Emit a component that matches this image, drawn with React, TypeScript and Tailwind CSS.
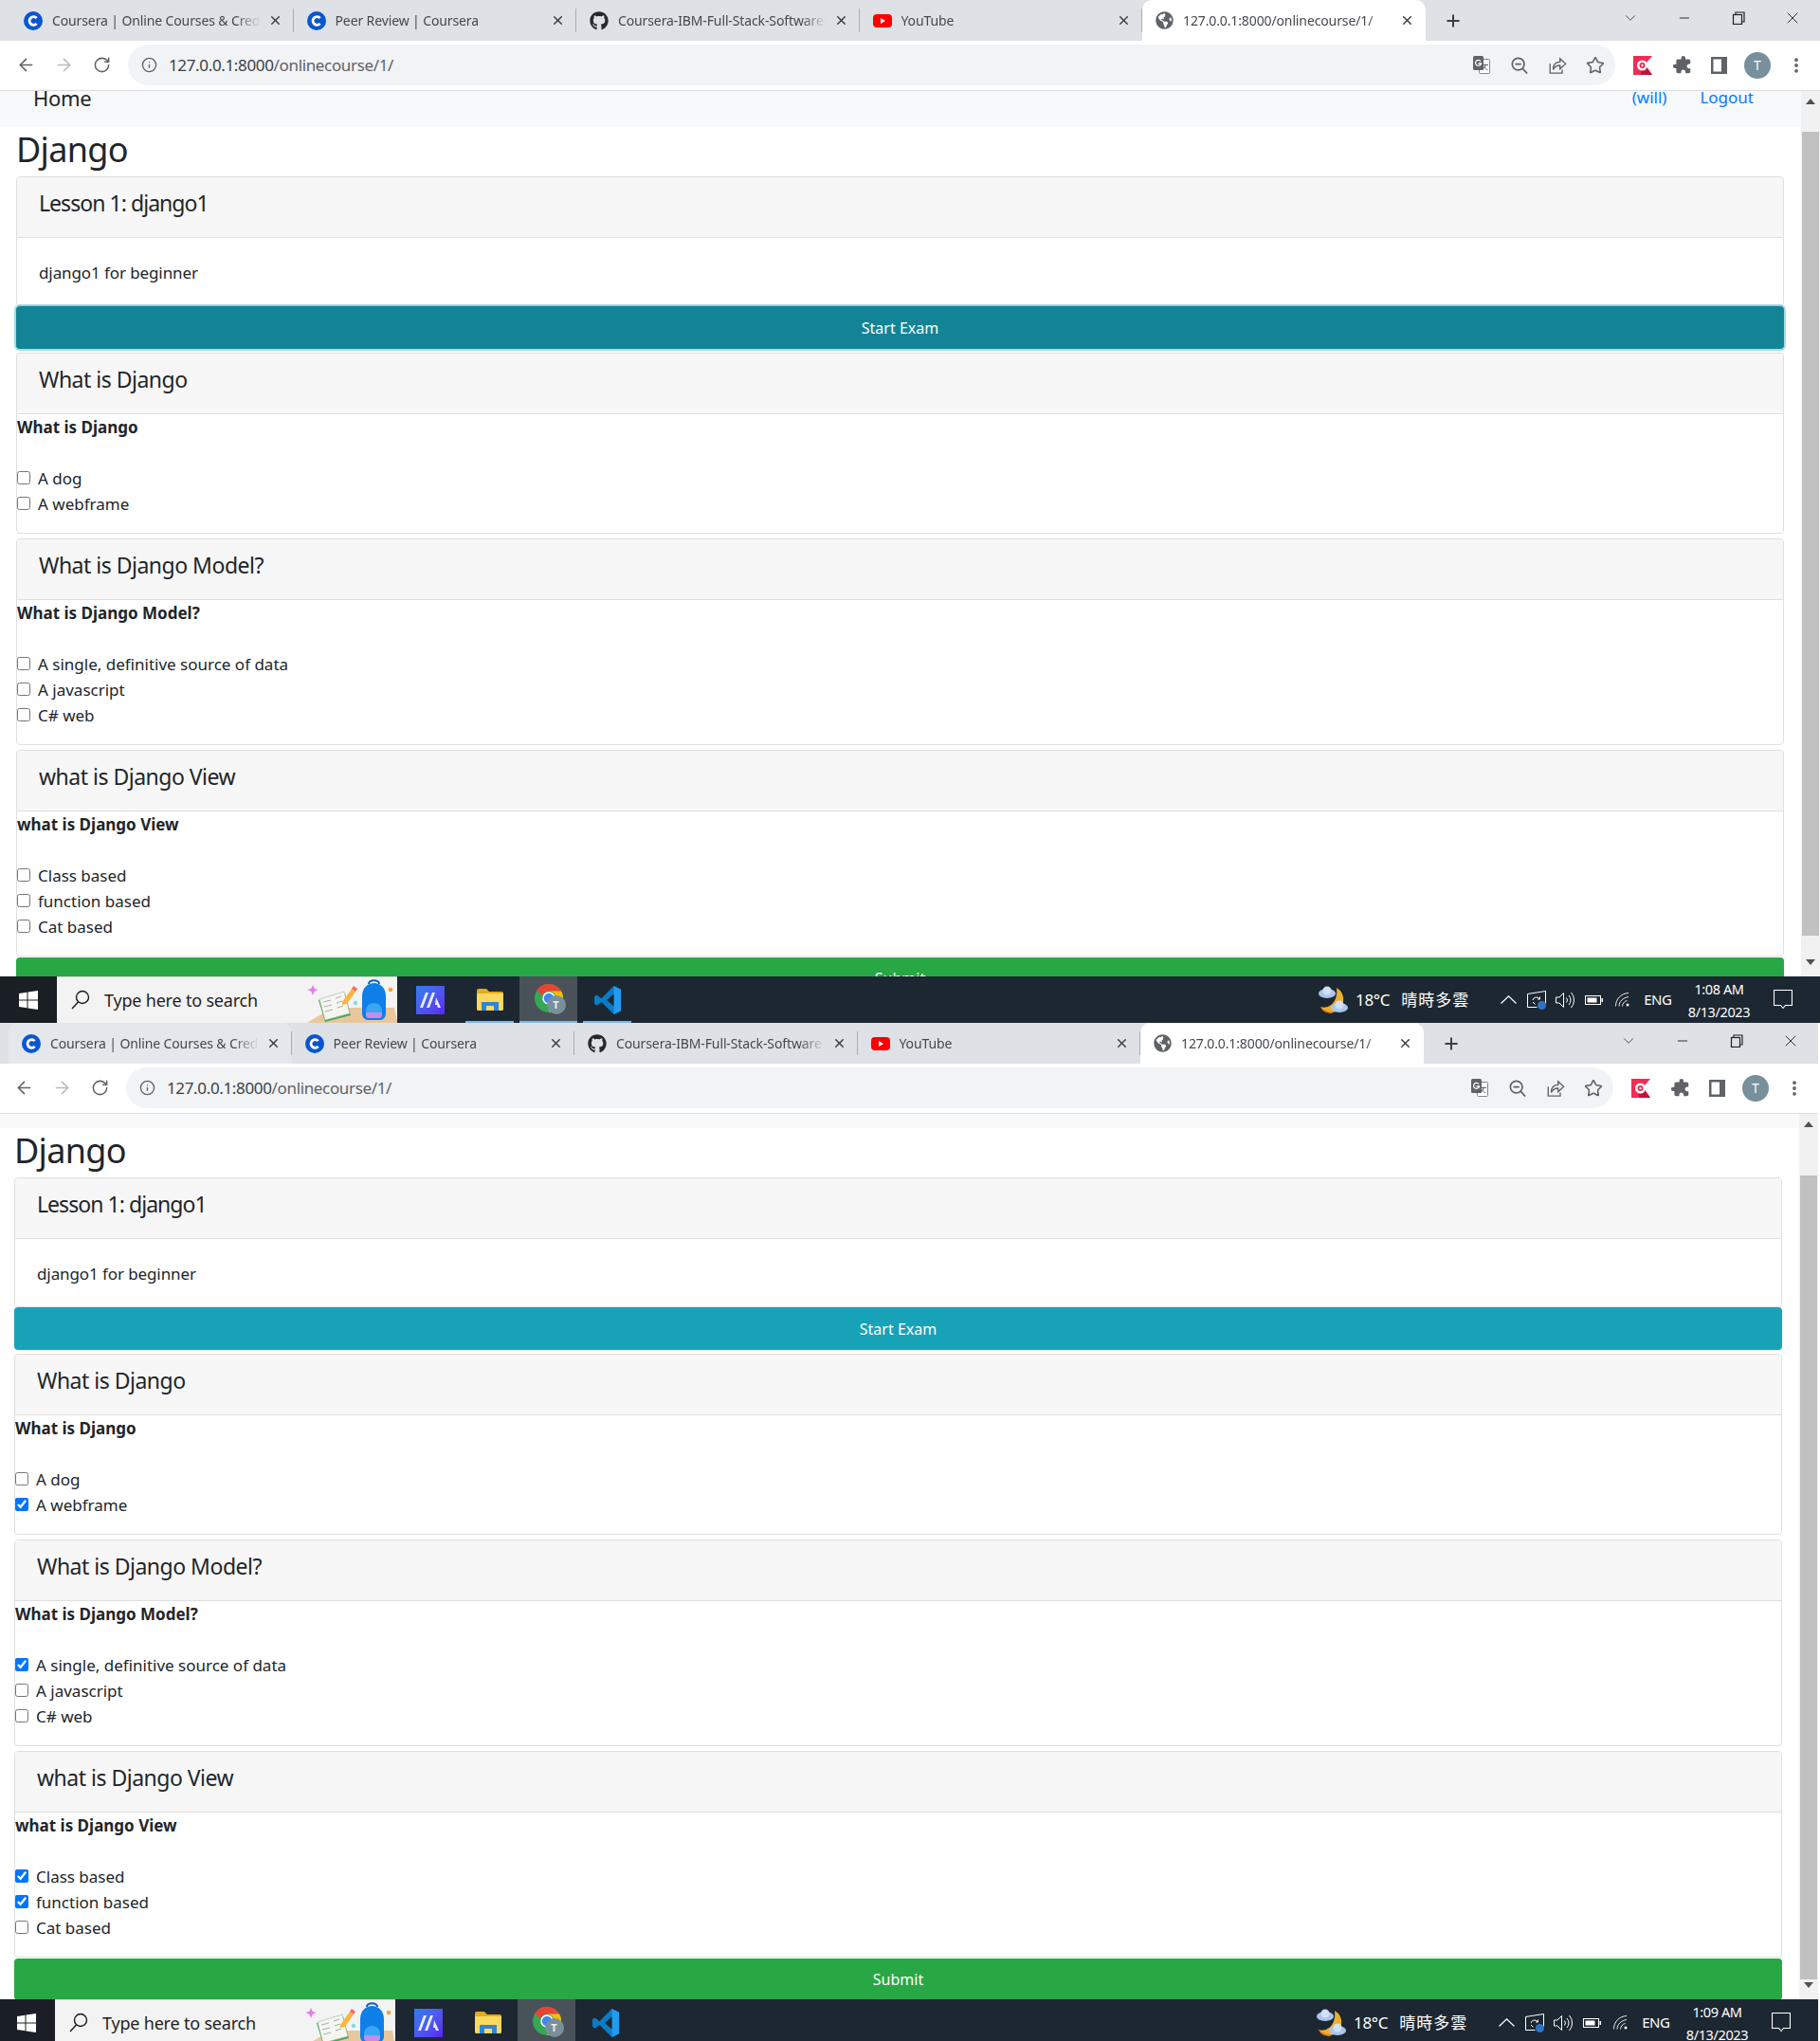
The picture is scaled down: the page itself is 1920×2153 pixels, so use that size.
import React from "react";
import { ArrowLeft, ArrowRight, RotateCw, Info, Star, X, Plus, ChevronDown, Minus, MoreVertical } from "lucide-react";
import { FaGithub, FaGlobeAmericas } from "react-icons/fa";
import { MdExtension } from "react-icons/md";

const CourseraIcon = () => (
  <svg width="20" height="20" viewBox="0 0 20 20" className="shrink-0">
    <circle cx="10" cy="10" r="10" fill="#0a56d2" />
    <path d="M13.6 7.2A4.3 4.3 0 1 0 13.6 12.8" fill="none" stroke="#fff" strokeWidth="2.8" />
  </svg>
);
const YoutubeIcon = () => (
  <svg width="20" height="20" viewBox="0 0 20 20" className="shrink-0">
    <rect x="0" y="3" width="20" height="14" rx="4" fill="#f00" />
    <path d="M8 7l5 3-5 3z" fill="#fff" />
  </svg>
);

type TabT = { icon: React.ReactNode; title: string; active?: boolean; hover?: boolean };

function Tab({ icon, title, active, hover }: TabT) {
  return (
    <div className={`relative flex items-center w-[298.5px] h-[43px] pl-[14px] pr-[12px] shrink-0 rounded-t-[10px] ${active ? "bg-white" : hover ? "bg-[#e4e7eb]" : ""}`}>
      {icon}
      <span className="ml-[10px] -mt-[1px] flex-1 overflow-hidden whitespace-nowrap text-[14px] text-[#45494e] tracking-[-0.12px] [mask-image:linear-gradient(to_right,black_88%,transparent)]">
        {title}
      </span>
      <X size={15} strokeWidth={2.4} className="ml-[8px] shrink-0 text-[#3c4043]" />
      {!active && <div className="ml-[11px] -mr-[12px] w-px h-[25px] bg-[#a9adb2] shrink-0" />}
    </div>
  );
}

function TabStrip({ hoverFirst }: { hoverFirst?: boolean }) {
  return (
    <div className="flex items-start h-[43px] bg-[#dee1e6] pl-[11px]">
      <Tab hover={hoverFirst} icon={<CourseraIcon />} title="Coursera | Online Courses & Credentials" />
      <Tab icon={<CourseraIcon />} title="Peer Review | Coursera" />
      <Tab icon={<FaGithub size={20} className="shrink-0 text-[#24292e]" />} title="Coursera-IBM-Full-Stack-Software-Developer" />
      <Tab icon={<YoutubeIcon />} title="YouTube" />
      <Tab active icon={<FaGlobeAmericas size={19} className="shrink-0 text-[#5f6368]" />} title="127.0.0.1:8000/onlinecourse/1/" />
      <Plus size={20} strokeWidth={2.4} className="ml-[19px] mt-[12px] shrink-0 text-[#3c4043]" />
      <ChevronDown size={18} strokeWidth={1.2} className="ml-[168px] mt-[10px] shrink-0 text-[#3c4043]" />
      <Minus size={16} strokeWidth={1.4} className="ml-[40px] mt-[11px] shrink-0 text-[#202124]" />
      <svg width="14" height="14" viewBox="0 0 14 14" className="ml-[42px] mt-[12px] shrink-0" fill="none" stroke="#202124" strokeWidth="1.2">
        <rect x="1.5" y="3.5" width="9" height="10" fill="#dee1e6" />
        <path d="M4 3.5V1h9v10h-2.5" />
      </svg>
      <X size={20} strokeWidth={1.1} className="ml-[40px] mt-[9px] shrink-0 text-[#202124]" />
    </div>
  );
}

const Slot = ({ w, children }: { w: number; children: React.ReactNode }) => (
  <div className="flex justify-center items-center shrink-0" style={{ width: w }}>{children}</div>
);

function Toolbar() {
  return (
    <div className="flex items-center h-[53px] bg-white border-b border-[#dadce0] pl-[7px] pb-[1px]">
      <Slot w={40}><ArrowLeft size={21} strokeWidth={1.8} className="text-[#5f6368]" /></Slot>
      <Slot w={40}><ArrowRight size={21} strokeWidth={1.8} className="text-[#b9bbbe]" /></Slot>
      <Slot w={41}><RotateCw size={19} strokeWidth={1.9} className="text-[#5f6368]" /></Slot>
      <div className="ml-[7px] flex items-center w-[1569px] h-[43px] rounded-full bg-[#f1f3f4] shrink-0">
        <Info size={17} strokeWidth={1.9} className="ml-[14px] text-[#5f6368]" />
        <span className="ml-[12px] mt-[1px] text-[17px] text-[#3c4043] tracking-[-0.35px]">
          127.0.0.1:8000<span className="text-[#5f6368]">/onlinecourse/1/</span>
        </span>
        <div className="ml-auto mr-[2px] flex items-center">
          <Slot w={40}>
            <svg width="18" height="19" viewBox="0 0 18 19">
              <rect x="6.500" y="3.500" width="11" height="15" rx="1" fill="#fff" stroke="#80868b" />
              <rect x="0" y="0" width="11" height="15" rx="1.500" fill="#5f6368" />
              <path d="M8 5.500A3 3 0 1 0 8.500 8H5.500" fill="none" stroke="#fff" strokeWidth="1.300" />
              <path d="M10 9.500h6M13 8.500v1c0 2-1.500 4-3 5M11.500 11.500c1 1.500 2.500 3 4 3.500" fill="none" stroke="#5f6368" strokeWidth="1" />
            </svg>
          </Slot>
          <Slot w={40}>
            <svg width="18" height="18" viewBox="0 0 20 20" fill="none" stroke="#5f6368" strokeWidth="1.900">
              <circle cx="8.500" cy="8.500" r="7" />
              <path d="M13.500 13.500L19 19.500M5 8.500h7" />
            </svg>
          </Slot>
          <Slot w={40}>
            <svg width="20" height="20" viewBox="0 0 22 22" fill="none" stroke="#5f6368" strokeWidth="1.500">
              <path d="M2.500 9v11h14v-4" />
              <path d="M6 16c0-6 3-9 8-9V3l6.500 6-6.500 6v-4c-3.500 0-6 1-8 5z" />
            </svg>
          </Slot>
          <Slot w={39}><Star size={20} strokeWidth={1.9} className="text-[#5f6368]" /></Slot>
        </div>
      </div>
      <Slot w={50}>
        <svg width="20" height="20" viewBox="0 0 20 20" className="ml-[8px]">
          <path d="M0 0h20l-8 9.500L20 20H0z" fill="#f02d55" />
          <path d="M8 16l5-6 7 10H8z" fill="#c4103a" />
          <circle cx="9.500" cy="10" r="5.500" fill="#fff" />
          <circle cx="9.500" cy="10" r="3" fill="#e8274b" />
          <circle cx="9.500" cy="10" r="1.200" fill="#fff" />
        </svg>
      </Slot>
      <Slot w={39}><MdExtension size={21} className="text-[#5f6368] ml-[2px] -scale-x-100" /></Slot>
      <Slot w={40}>
        <svg width="17" height="18" viewBox="0 0 17 18" className="ml-[1px]">
          <rect x="0" y="0" width="17" height="18" fill="#5f6368" />
          <rect x="2.500" y="2.500" width="8.500" height="13" fill="#fff" />
        </svg>
      </Slot>
      <Slot w={40}>
        <div className="ml-[2px] flex items-center justify-center w-[28px] h-[28px] rounded-full bg-[#78909c] text-white text-[14px]">T</div>
      </Slot>
      <Slot w={40}><MoreVertical size={20} strokeWidth={2.6} className="text-[#5f6368] ml-[3px]" /></Slot>
    </div>
  );
}

function Cb({ label, checked }: { label: string; checked?: boolean }) {
  return (
    <label className="flex items-center h-[27px]">
      <input type="checkbox" readOnly checked={!!checked} className="w-[14px] h-[14px] m-0 -mt-[2px] shrink-0" />
      <span className="ml-[8px] text-[17px] text-[#212529]">{label}</span>
    </label>
  );
}

function CardHeader({ title, tight }: { title: string; tight?: boolean }) {
  return (
    <div className="h-[64px] bg-[#f7f7f7] border-b border-[#dfdfdf] pl-[23px] pt-[9px] rounded-t-[4px]">
      <h3 className={`text-[23px] leading-[36px] text-[#212529] font-normal ${tight ? "tracking-[-0.95px]" : "tracking-[-0.5px]"}`}>{title}</h3>
    </div>
  );
}

type Opt = { label: string; checked?: boolean };

function Question({ title, opts, first, last }: { title: string; opts: Opt[]; first?: boolean; last?: boolean }) {
  return (
    <div className={`border border-[#dfdfdf] rounded-[4px] ${first ? "mt-[4px]" : "mt-[5px]"} ${last ? "mb-[1px]" : ""}`}>
      <CardHeader title={title} />
      <div className="pb-[17px]">
        <div className="h-[54px] pt-[2px] text-[17px] leading-[24px] font-bold text-[#212529]">{title}</div>
        <div>
          {opts.map((o) => <Cb key={o.label} {...o} />)}
        </div>
      </div>
    </div>
  );
}

function Scrollbar({ thumbTop, thumbH }: { thumbTop: number; thumbH: number }) {
  return (
    <div className="flex flex-col w-[20px] shrink-0 bg-[#f1f1f1]">
      <div className="flex justify-center pt-[8px] h-[17px] shrink-0">
        <div className="w-0 h-0 border-x-[5px] border-x-transparent border-b-[6px] border-b-[#505050]" />
      </div>
      <div className="shrink-0" style={{ height: thumbTop - 17 }} />
      <div className="shrink-0 bg-[#c1c1c1] mx-[1px]" style={{ height: thumbH }} />
      <div className="flex-1" />
      <div className="flex justify-center items-start h-[18px] shrink-0">
        <div className="w-0 h-0 border-x-[5px] border-x-transparent border-t-[6px] border-t-[#505050]" />
      </div>
    </div>
  );
}

function Page({ scrolled, done }: { scrolled?: boolean; done?: boolean }) {
  return (
    <div className="flex h-[934px] overflow-hidden bg-white">
      <div className={`flex-1 min-w-0 ${scrolled ? "-mt-[23px]" : ""}`}>
        <nav className="flex justify-between h-[38px] bg-[#f8f9fa] overflow-hidden">
          <a className="ml-[35px] -mt-[8px] text-[22px] leading-[30px] text-[#212529] tracking-[-0.3px]">Home</a>
          <div className="flex text-[17px] leading-[24px] text-[#007bff] -mt-[5px] mr-[50px]">
            <a>(will)</a>
            <a className="ml-[35px]">Logout</a>
          </div>
        </nav>
        <div className="pl-[17px] pr-[18px]">
          <h2 className="h-[52px] leading-[48px] text-[36px] font-normal text-[#212529] tracking-[-0.7px]">Django</h2>
          <div className="border border-[#dfdfdf] rounded-[4px]">
            <CardHeader tight title="Lesson 1: django1" />
            <div className="h-[71px] pl-[23px] pt-[25px] text-[17px] leading-[24px] text-[#212529] tracking-[-0.1px]">django1 for beginner</div>
          </div>
          <button className={`relative block w-full h-[45px] rounded-[4px] text-[16px] text-white ${done ? "bg-[#17a2b8]" : "bg-[#138496] shadow-[0_0_0_2px_rgba(58,176,195,0.45)]"}`}>Start Exam</button>
          <Question first title="What is Django" opts={[{ label: "A dog" }, { label: "A webframe", checked: done }]} />
          <Question title="What is Django Model?" opts={[{ label: "A single, definitive source of data", checked: done }, { label: "A javascript" }, { label: "C# web" }]} />
          <Question last title="what is Django View" opts={[{ label: "Class based", checked: done }, { label: "function based", checked: done }, { label: "Cat based" }]} />
          <button className="block w-full h-[44px] rounded-[4px] bg-[#28a745] text-[16px] text-white">Submit</button>
        </div>
      </div>
      <Scrollbar thumbTop={scrolled ? 65 : 43} thumbH={848} />
    </div>
  );
}

const TrayUnderline = ({ w, children, bg }: { w: number; children: React.ReactNode; bg?: boolean }) => (
  <div className={`relative flex items-center justify-center h-[49px] shrink-0 ${bg ? "bg-[#4a5259]" : ""}`} style={{ width: w }}>
    {children}
    <div className="absolute left-0 right-0 bottom-0 h-[2px] bg-[#76b9ed]" />
  </div>
);

function SearchArt() {
  return (
    <svg width="98" height="49" viewBox="0 0 98 49" className="shrink-0">
      <path d="M1 49L30 32H95L98 46V49z" fill="#e8c79c" />
      <path d="M15 24l28-7 6 23-27 7z" fill="#45a85c" />
      <path d="M16 23l26-8 6 23-26 7z" fill="#f5f6ef" stroke="#a4b5a6" strokeWidth=".6" />
      <path d="M20 26l8-2M21 31l8-2M22 36l8-2M33 22l6-2M34 27l6-2M35 32l6-2" stroke="#a4aeb4" strokeWidth="1" />
      <path d="M40 26L50 12l4 3-9 13-5 1z" fill="#f6b73c" />
      <path d="M50 12l2-3 4 3-2 3z" fill="#ef6b5c" />
      <path d="M9 8l1.700 3.800L14.500 13l-3.800 1.700L9 19l-1.700-4.300L3.500 13l3.800-1.200z" fill="#e879f0" />
      <circle cx="54" cy="27" r="2.200" fill="#7fdbe3" />
      <path d="M61 20c0-9 6-14 12.500-14S86 11 86 20v18c0 4-3 7-6 7H67c-3 0-6-3-6-7z" fill="#0f7fe8" />
      <path d="M68 7c0-5 11-5 11 0" fill="none" stroke="#0a5fc0" strokeWidth="2" />
      <path d="M65 36c0-12 17-12 17 0v4H65z" fill="#3aa5f5" />
      <path d="M65 37h17v3c0 2-1 3-3 3H68c-2 0-3-1-3-3z" fill="#c58ce8" />
      <circle cx="91" cy="13" r="2.300" fill="#f5a623" />
    </svg>
  );
}

function Taskbar({ time }: { time: string }) {
  return (
    <div className="flex items-center h-[49px] bg-[#1d2731] text-white shrink-0">
      <div className="flex items-center justify-center w-[60px] h-full bg-[#1a1f25] shrink-0">
        <svg width="20" height="20" viewBox="0 0 20 20" fill="#fff">
          <path d="M0 3l8.500-1.300V9.500H0zM9.500 1.500L20 0v9.500H9.500zM0 10.500h8.500v7.800L0 17zM9.500 10.500H20V20L9.500 18.500z" />
        </svg>
      </div>
      <div className="flex items-center w-[359px] h-full bg-[#f3f3f3] shrink-0 border-t border-[#d8d8d8]">
        <svg width="20" height="22" viewBox="0 0 20 22" fill="none" stroke="#1a1a1a" strokeWidth="1.400" className="ml-[15px] shrink-0">
          <circle cx="12" cy="8" r="6.500" />
          <path d="M7.500 13L1 20" />
        </svg>
        <span className="ml-[15px] text-[18px] text-[#1f1f1f] whitespace-nowrap tracking-[-0.2px]">Type here to search</span>
        <div className="ml-auto"><SearchArt /></div>
      </div>
      <div className="flex items-center justify-center w-[30px] h-[30px] ml-[20px] shrink-0 bg-gradient-to-br from-[#2d7df0] to-[#5b22f0]">
        <svg width="22" height="16" viewBox="0 0 22 16" fill="#e6edff">
          <path d="M6 0h3L3 16H0zM13 0h3l-6 16H7zM17 5l5 11h-3l-1-3-2 0z" />
        </svg>
      </div>
      <div className="ml-[22px] shrink-0">
        <TrayUnderline w={51}>
          <svg width="28" height="23" viewBox="0 0 28 23" className="-mt-[1px]">
            <path d="M0 2q0-2 2-2h8l3 3h13q2 0 2 2v16q0 2-2 2H2q-2 0-2-2z" fill="#e8a91c" />
            <path d="M0 5h28v16q0 2-2 2H2q-2 0-2-2z" fill="#fbd85f" />
            <path d="M5 23v-9h18v9h-5v-5h-8v5z" fill="#2f86d8" />
          </svg>
        </TrayUnderline>
      </div>
      <div className="ml-[6px] shrink-0">
        <TrayUnderline w={61} bg>
          <div className="relative w-[30px] h-[32px] -mt-[1px]">
            <svg width="30" height="30" viewBox="0 0 30 30">
              <circle cx="15" cy="15" r="15" fill="#34a853" />
              <path d="M15 0a15 15 0 0 1 13 7.500H15a7.500 7.500 0 0 0-7 4.500L2 7a15 15 0 0 1 13-7z" fill="#ea4335" />
              <path d="M28 7.500A15 15 0 0 1 15 30l6.500-11.300A7.500 7.500 0 0 0 15 7.500z" fill="#fbbc05" />
              <circle cx="15" cy="15" r="6" fill="#4285f4" stroke="#fff" strokeWidth="1.500" />
            </svg>
            <div className="absolute -right-[3px] bottom-[0px] flex items-center justify-center w-[20px] h-[20px] rounded-full bg-[#78909c] text-[11px] text-[#e8edf0] font-bold">T</div>
          </div>
        </TrayUnderline>
      </div>
      <div className="ml-[6px] shrink-0">
        <TrayUnderline w={51}>
          <svg width="30" height="30" viewBox="0 0 30 32">
            <path d="M22 0l8 4v24l-8 4L8 18l-5 4-3-2v-8l3-2 5 4z" fill="#0a7cc7" />
            <path d="M22 0l8 4v24l-8 4z" fill="#1f9cf0" />
            <path d="M22 9l-8 7 8 7z" fill="#1d2731" />
          </svg>
        </TrayUnderline>
      </div>
      <svg width="32" height="30" viewBox="0 0 32 30" className="ml-[724px] shrink-0">
        <path d="M20 2a14 14 0 0 1-4 26 12 12 0 0 1-13-6c8 3 19-4 17-20z" fill="#eeb02c" />
        <path d="M3 22c4 4 10 6 14 5l-2 2c-5 0-10-2-12-7z" fill="#e87820" />
        <ellipse cx="10" cy="8" rx="9" ry="5" fill="#a9c6ee" />
        <circle cx="10" cy="5" r="4.500" fill="#cfe0f8" />
        <ellipse cx="23" cy="23" rx="9" ry="5" fill="#a9c6ee" />
        <circle cx="23" cy="20" r="4.500" fill="#cfe0f8" />
      </svg>
      <span className="ml-[8px] text-[17px] whitespace-nowrap tracking-[-0.3px]">18°C</span>
      <span className="ml-[12px] text-[17px] whitespace-nowrap tracking-[1px]">晴時多雲</span>
      <svg width="17" height="9" viewBox="0 0 17 9" fill="none" stroke="#fff" strokeWidth="1.200" className="ml-[33px] shrink-0">
        <path d="M.5 8.500L8.500.8l8 7.700" />
      </svg>
      <svg width="20" height="20" viewBox="0 0 20 20" fill="none" stroke="#fff" strokeWidth="1" className="ml-[11px] shrink-0">
        <path d="M.5 3.500L19.500.5v13M.5 3.500v14h10" />
        <path d="M6 10a4 4 0 0 1 6.500-2l1 1M6 12l2.500 2.500M13.500 6.500V9H11" />
        <circle cx="15.500" cy="15.500" r="4.500" fill="#2f73c9" stroke="none" />
      </svg>
      <svg width="20" height="18" viewBox="0 0 20 18" fill="none" stroke="#fff" strokeWidth="1" className="ml-[10px] shrink-0">
        <path d="M.5 6h3.500l4.500-4.500v15L4 12H.5zM11.500 6.500a4 4 0 0 1 0 5M14 4a8 8 0 0 1 0 10M16.500 1a12 12 0 0 1 0 16" />
      </svg>
      <svg width="19" height="10" viewBox="0 0 19 10" className="ml-[11px] shrink-0">
        <rect x=".5" y=".5" width="16" height="9" fill="none" stroke="#fff" />
        <rect x="2.500" y="2.500" width="10" height="5" fill="#fff" />
        <rect x="17.500" y="3" width="1.500" height="4" fill="#fff" />
      </svg>
      <svg width="15" height="15" viewBox="0 0 15 15" fill="none" stroke="#fff" strokeWidth=".9" className="ml-[13px] shrink-0">
        <path d="M.5 14.500C.5 7 6 1 14 .5M4 14.500c0-5 4-9 10-10M7.500 14.500c0-3 2.500-5.500 5-6" />
        <circle cx="13" cy="13" r="1.500" fill="#fff" stroke="none" />
      </svg>
      <span className="ml-[15px] text-[15px] whitespace-nowrap tracking-[-0.5px]">ENG</span>
      <div className="ml-[15px] w-[70px] flex flex-col items-center shrink-0 text-[14.500px] leading-[24px] tracking-[-0.4px] whitespace-nowrap">
        <span>{time}</span>
        <span>8/13/2023</span>
      </div>
      <svg width="20" height="21" viewBox="0 0 20 21" fill="none" stroke="#fff" strokeWidth="1.100" className="ml-[23px] shrink-0">
        <path d="M.5.500h19v16h-7l-2.500 3-2.500-3h-7z" />
      </svg>
    </div>
  );
}

function Screen({ second }: { second?: boolean }) {
  return (
    <div className={`w-[1920px] h-[1079px] flex flex-col shrink-0 ${second ? "-ml-[2px]" : ""}`}>
      <TabStrip hoverFirst={second} />
      <Toolbar />
      <Page scrolled={second} done={second} />
      <Taskbar time={second ? "1:09 AM" : "1:08 AM"} />
    </div>
  );
}

export default function App() {
  return (
    <div className="w-[1920px] h-[2153px] overflow-hidden bg-white font-['Noto_Sans','Noto_Sans_CJK_TC',sans-serif]">
      <Screen />
      <Screen second />
    </div>
  );
}
